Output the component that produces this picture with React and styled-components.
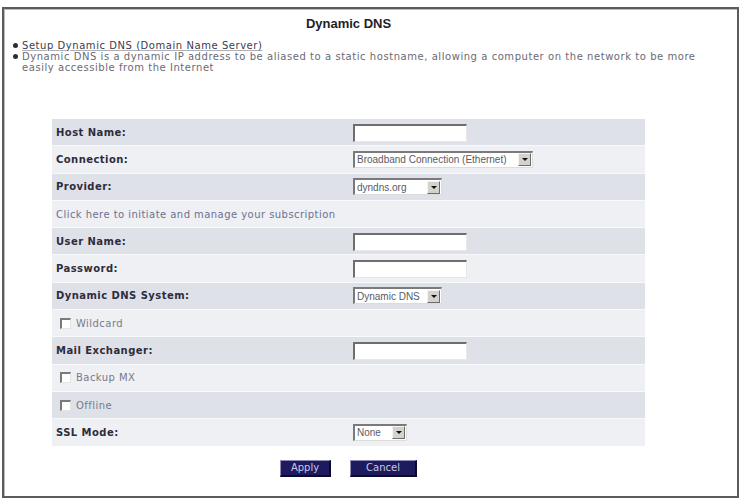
import styled, { createGlobalStyle } from "styled-components";

const GlobalStyle = createGlobalStyle`
    body {
        margin: 0;
        background: #fff;
        font-family: "DejaVu Sans", Verdana, sans-serif;
    }
`;

const Frame = styled.div`
    box-sizing: border-box;
    margin: 7px 4px 0 2px;
    width: 737px;
    height: 491px;
    border: 2px solid #5c5c5c;
    box-shadow: inset 1px 1px 0 #bcbcbc;
    background: #fff;
`;

const Content = styled.div`
    margin-left: 48px;
    width: 593px;
`;

const Titulo = styled.h2`
    margin: 7px 0 0;
    text-align: center;
    font-family: "Liberation Sans", Arial, sans-serif;
    font-size: 13px;
    line-height: 16px;
    font-weight: bold;
    color: #1e1e2a;
`;

const Lista = styled.ul`
    list-style: none;
    margin: 8px 0 0;
    padding: 0 30px 0 18px;
    font-size: 10px;
    line-height: 11px;
    letter-spacing: 0.55px;
    color: #6a6a74;
`;

const Item = styled.li`
    position: relative;
    &::before {
        content: "";
        position: absolute;
        left: -9px;
        top: 3px;
        width: 5px;
        height: 5px;
        border-radius: 50%;
        background: #2c2c34;
    }
`;

const Link = styled.span`
    color: ${p => p.$dark ? "#3c3c4c" : "#6a6a74"};
    text-decoration: ${p => p.$dark ? "underline" : "none"};
    text-decoration-color: #b0b0b8;
`;

const Tabela = styled.div`
    margin-top: 46px;
    display: flex;
    flex-direction: column;
    gap: 1px;
    background: #f8f9fb;
`;

const Linha = styled.div`
    display: grid;
    grid-template-columns: 301px 1fr;
    align-items: center;
    height: 26.3px;
    background: ${p => p.$escura ? "#dfe1e9" : "#eef0f4"};
`;

const Rotulo = styled.div`
    padding-left: 4px;
    font-size: 10px;
    letter-spacing: 0.45px;
    font-weight: ${p => p.$normal ? "normal" : "bold"};
    color: ${p => p.$cor || "#2e2c3c"};
    display: flex;
    align-items: center;
    gap: 5px;
`;

const Caixa = styled.span`
    display: inline-block;
    box-sizing: border-box;
    width: 11px;
    height: 11px;
    margin-left: 4px;
    background: #fff;
    border-top: 2px solid #7a7a7a;
    border-left: 2px solid #7a7a7a;
    border-right: 1px solid #e4e4e4;
    border-bottom: 1px solid #e4e4e4;
`;

const Campo = styled.input`
    box-sizing: border-box;
    width: 114px;
    height: 18px;
    margin: 0;
    padding: 0 3px;
    background: #fff;
    border-top: 2px solid #6e6e6e;
    border-left: 2px solid #6e6e6e;
    border-right: 1px solid #e8e8e8;
    border-bottom: 1px solid #e8e8e8;
    outline: none;
`;

const Selecao = styled.div`
    box-sizing: border-box;
    width: ${p => p.$largura}px;
    height: 17px;
    display: flex;
    align-items: center;
    background: #fff;
    border-top: 2px solid #7a7a7a;
    border-left: 2px solid #7a7a7a;
    border-right: 1px solid #dcdcdc;
    border-bottom: 1px solid #dcdcdc;
    font-family: "Liberation Sans", Arial, sans-serif;
    font-size: 10px;
    color: #5a5a66;
    padding-left: 2px;
`;

const SelecaoTexto = styled.span`
    flex: 1;
    white-space: nowrap;
    overflow: hidden;
`;

const Seta = styled.span`
    box-sizing: border-box;
    width: 13px;
    height: 13px;
    margin-right: 1px;
    background: #d4d2cc;
    border-top: 1px solid #f4f4f4;
    border-left: 1px solid #f4f4f4;
    border-right: 1px solid #6c6c6c;
    border-bottom: 1px solid #6c6c6c;
    display: flex;
    align-items: center;
    justify-content: center;
    &::after {
        content: "";
        border-left: 3px solid transparent;
        border-right: 3px solid transparent;
        border-top: 3px solid #111;
    }
`;

const Botoes = styled.div`
    margin-top: 14px;
    display: flex;
    justify-content: center;
    gap: 19px;
`;

const Botao = styled.button`
    box-sizing: border-box;
    width: ${p => p.$largura}px;
    height: 17px;
    padding: 0;
    background: #1d1b5e;
    color: #c8c8e4;
    font-family: "DejaVu Sans", Verdana, sans-serif;
    font-size: 10px;
    border-top: 1px solid #8c8cb4;
    border-left: 1px solid #8c8cb4;
    border-right: 2px solid #0a0a30;
    border-bottom: 2px solid #0a0a30;
`;

function Select({ texto, largura }) {
    return (
        <Selecao $largura={largura}>
            <SelecaoTexto>{texto}</SelecaoTexto>
            <Seta />
        </Selecao>
    );
}

const linhas = [
    { rotulo: "Host Name:", tipo: "campo" },
    { rotulo: "Connection:", tipo: "select", texto: "Broadband Connection (Ethernet)", largura: 180 },
    { rotulo: "Provider:", tipo: "select", texto: "dyndns.org", largura: 89 },
    { rotulo: "Click here to initiate and manage your subscription", tipo: "link" },
    { rotulo: "User Name:", tipo: "campo" },
    { rotulo: "Password:", tipo: "campo" },
    { rotulo: "Dynamic DNS System:", tipo: "select", texto: "Dynamic DNS", largura: 89 },
    { rotulo: "Wildcard", tipo: "check" },
    { rotulo: "Mail Exchanger:", tipo: "campo" },
    { rotulo: "Backup MX", tipo: "check" },
    { rotulo: "Offline", tipo: "check" },
    { rotulo: "SSL Mode:", tipo: "select", texto: "None", largura: 54 },
];

function App() {
    return (
        <>
            <GlobalStyle />
            <Frame>
                <Content>
                    <Titulo>Dynamic DNS</Titulo>
                </Content>
                <Lista>
                    <Item><Link $dark>Setup Dynamic DNS (Domain Name Server)</Link></Item>
                    <Item>Dynamic DNS is a dynamic IP address to be aliased to a static hostname, allowing a computer on the network to be more easily accessible from the Internet</Item>
                </Lista>
                <Content>
                    <Tabela>
                        {linhas.map((linha, i) => (
                            <Linha key={linha.rotulo} $escura={i % 2 === 0}>
                                {linha.tipo === "check" ? (
                                    <Rotulo $normal $cor="#7a7a84"><Caixa />{linha.rotulo}</Rotulo>
                                ) : linha.tipo === "link" ? (
                                    <Rotulo $normal $cor="#6c7090">{linha.rotulo}</Rotulo>
                                ) : (
                                    <Rotulo>{linha.rotulo}</Rotulo>
                                )}
                                <div>
                                    {linha.tipo === "campo" && <Campo type={linha.rotulo === "Password:" ? "password" : "text"} />}
                                    {linha.tipo === "select" && <Select texto={linha.texto} largura={linha.largura} />}
                                </div>
                            </Linha>
                        ))}
                    </Tabela>
                    <Botoes>
                        <Botao $largura={51}>Apply</Botao>
                        <Botao $largura={67}>Cancel</Botao>
                    </Botoes>
                </Content>
            </Frame>
        </>
    );
}

export default App;
